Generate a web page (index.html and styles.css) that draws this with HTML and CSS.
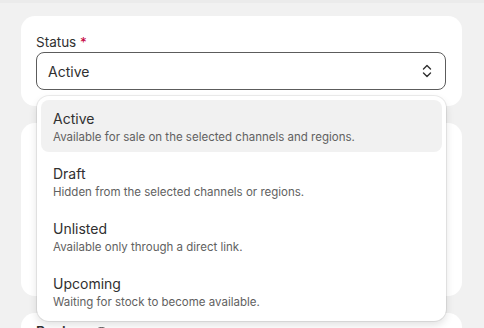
FILE: index.html
```html
<!DOCTYPE html>
<html lang="en">
<head>
  <meta charset="UTF-8" />
  <meta name="viewport" content="width=device-width, initial-scale=1.0"/>
  <title>Product status</title>
  <link rel="stylesheet" href="styles.css">
</head>
<body>

  <div class="top-edge"></div>

  <div class="card">
    <label class="field-label">Status <span class="required">*</span></label>
    <div class="select-wrap">
      <div class="select">
        <span>Active</span>
        <svg class="chevron" width="20" height="20" viewBox="0 0 20 20">
          <path d="M6.5 8 10 4.6 13.5 8M6.5 12 10 15.4 13.5 12" fill="none" stroke="#303030" stroke-width="1.4" stroke-linecap="round" stroke-linejoin="round"/>
        </svg>
      </div>

      <!-- options list -->
      <ul class="options">
        <li class="option selected">
          <div class="option-title">Active</div>
          <div class="option-desc">Available for sale on the selected channels and regions.</div>
        </li>
        <li class="option">
          <div class="option-title">Draft</div>
          <div class="option-desc">Hidden from the selected channels or regions.</div>
        </li>
        <li class="option">
          <div class="option-title">Unlisted</div>
          <div class="option-desc">Available only through a direct link.</div>
        </li>
        <li class="option">
          <div class="option-title">Upcoming</div>
          <div class="option-desc">Waiting for stock to become available.</div>
        </li>
      </ul>
    </div>
  </div>

  <div class="card card-tall"></div>

  <div class="card">
    <div class="card-heading">Regions <span class="info">i</span></div>
  </div>

</body>
</html>
```

FILE: styles.css
```css
body {
  margin: 0;
  font-family: Inter, "Noto Sans", sans-serif;
  background: #f1f1f1;
  color: #303030;
  height: 328px;
  overflow: hidden;
}

.top-edge {
  height: 3px;
  background: #ebebeb;
  margin-bottom: 13px;
}

.card {
  background: white;
  border-radius: 14px;
  margin: 0 22px 17px 21px;
  padding: 16px 16px 16px 15px;
}

.card-tall {
  height: 173px;
  box-sizing: border-box;
}

.field-label {
  display: block;
  font-size: 13.5px;
  line-height: 20px;
}

.required {
  color: #c5003d;
}

.select-wrap {
  position: relative;
}

.select {
  display: flex;
  align-items: center;
  justify-content: space-between;
  height: 38px;
  box-sizing: border-box;
  border: 1px solid #5c5c5c;
  border-radius: 8px;
  padding: 0 8px 0 11px;
  font-size: 14px;
}

.options {
  position: absolute;
  top: 44px;
  left: 1px;
  right: 0;
  list-style: none;
  margin: 0;
  padding: 4px;
  background: white;
  border-radius: 12px;
  box-shadow: 0 0 0 1px rgba(0, 0, 0, 0.07), 0 4px 8px rgba(0, 0, 0, 0.12);
  display: flex;
  flex-direction: column;
  gap: 3px;
  z-index: 10;
}

.option {
  padding: 10px 12px 7px;
  border-radius: 8px;
}

.option.selected {
  background: #f1f1f1;
}

.option-title {
  font-size: 14px;
  line-height: 18px;
}

.option-desc {
  font-size: 11.5px;
  line-height: 16px;
  margin-top: 1px;
  color: #616161;
}

.card-heading {
  font-size: 14px;
  font-weight: 600;
  line-height: 20px;
  margin-top: -7px;
}

.info {
  display: inline-block;
  width: 13px;
  height: 13px;
  border: 1.5px solid #4a4a4a;
  border-radius: 50%;
  font-size: 9px;
  line-height: 13px;
  text-align: center;
  vertical-align: -1px;
}
```
